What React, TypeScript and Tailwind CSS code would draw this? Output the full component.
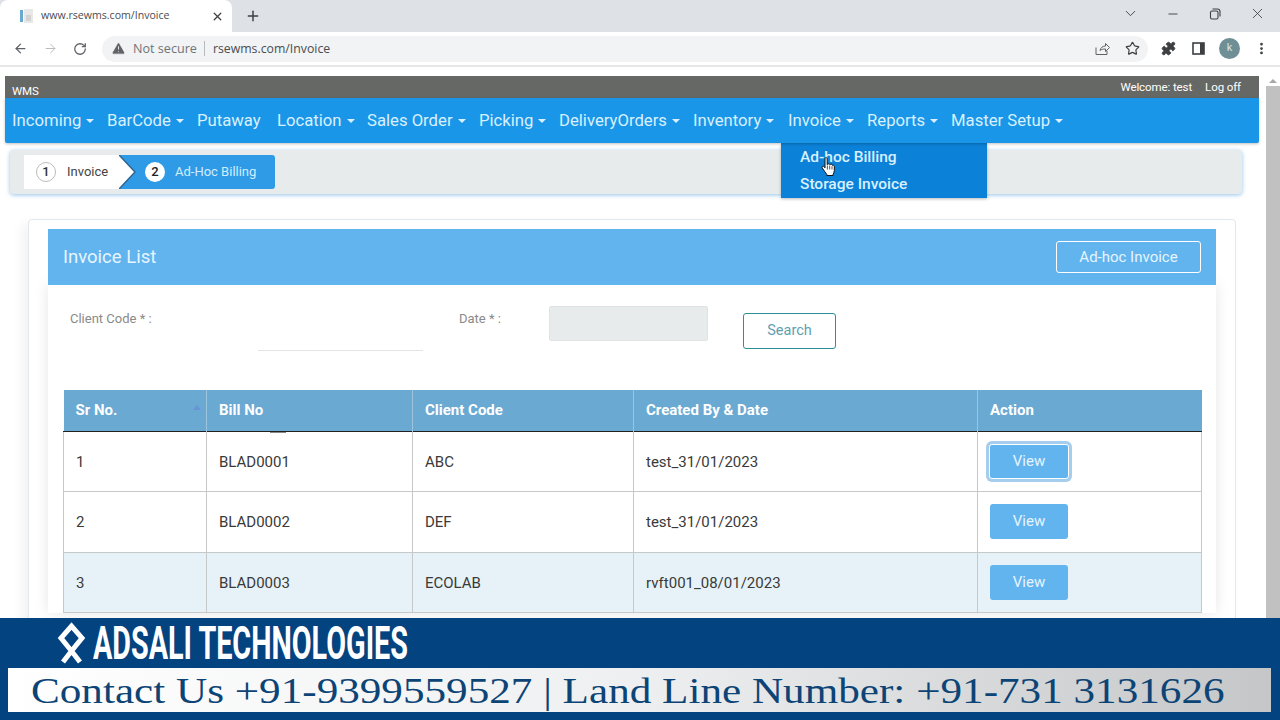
import React from "react";
import { ArrowLeft, ArrowRight, RotateCw, X, Plus, ChevronDown, Minus, Star, EllipsisVertical, Puzzle, TriangleAlert } from "lucide-react";

const navItems: [string, boolean, string][] = [
  ["Incoming", true, "w-[95px]"],
  ["BarCode", true, "w-[90px]"],
  ["Putaway", false, "w-[80px]"],
  ["Location", true, "w-[90px]"],
  ["Sales Order", true, "w-[112px]"],
  ["Picking", true, "w-[80px]"],
  ["DeliveryOrders", true, "w-[134px]"],
  ["Inventory", true, "w-[95px]"],
  ["Invoice", true, "w-[79px]"],
  ["Reports", true, "w-[84px]"],
  ["Master Setup", true, "w-[130px]"],
];

const rows = [
  ["1", "BLAD0001", "ABC", "test_31/01/2023", "h-[60px]"],
  ["2", "BLAD0002", "DEF", "test_31/01/2023", "h-[61px]"],
  ["3", "BLAD0003", "ECOLAB", "rvft001_08/01/2023", "h-[60px]"],
];

function Caret() {
  return <span className="ml-[5px] inline-block h-0 w-0 border-x-[4px] border-t-[4px] border-x-transparent border-t-[#d8f0ff] align-middle" />;
}

function HandCursor() {
  return (
    <svg width="16" height="20" viewBox="0 0 15 20" className="absolute left-[820px] top-[157px]">
      <path d="M4.5 1.6c0-1.3 2.2-1.3 2.2 0v6l.4-.1c.3-1 2-1 2.2 0l.3.3c.4-.9 2-.8 2.1.2l.2.4c.5-.6 1.8-.3 1.9.7v4.5c0 1.6-.7 2.7-1.2 3.7v1.2H6.3v-1.2c-1-1.2-2.6-3.4-4.5-6.3-.9-1.3.9-2.4 1.9-1.2l.8 1z" fill="#fff" stroke="#111" strokeWidth="1" strokeLinejoin="round" />
      <path d="M6.9 8.5v4M9.2 8.5v4M11.5 9.2v3.3" stroke="#111" strokeWidth=".7" />
    </svg>
  );
}

export default function App() {
  return (
    <div className="relative flex h-[720px] w-[1280px] flex-col overflow-hidden bg-white font-['Roboto',sans-serif]">
      {/* tab strip */}
      <div className="flex h-[32px] shrink-0 items-center bg-[#dee1e6] pr-[14px]">
        <div className="flex h-[32px] w-[232px] items-center rounded-t-[8px] bg-white pl-[19px] pr-[8px] font-['Open_Sans',sans-serif]">
          <svg width="16" height="16" viewBox="0 0 16 16" className="shrink-0">
            <rect x="1" y="2" width="3" height="12" fill="#6aa9cf" />
            <rect x="5" y="1" width="9" height="14" fill="#e8e8e8" />
            <path d="M7 8h5M7 10h5M7 12h5" stroke="#bdbdbd" strokeWidth="1" />
          </svg>
          <span className="ml-[6px] flex-1 text-[10.6px] text-[#4a4d51]">www.rsewms.com/Invoice</span>
          <X size={13} strokeWidth={2.4} className="text-[#3c4043]" />
        </div>
        <Plus size={16} strokeWidth={2.2} className="ml-[13px] text-[#3c4043]" />
        <div className="flex-1" />
        <ChevronDown size={17} strokeWidth={1.3} className="mb-[5px] text-[#3c4043]" />
        <Minus size={14} strokeWidth={1.6} className="mb-[5px] ml-[27px] text-[#3c4043]" />
        <svg width="12" height="12" viewBox="0 0 12 12" className="mb-[5px] ml-[29px]" fill="none" stroke="#3c4043" strokeWidth="1.1">
          <rect x="1.5" y="3" width="7.5" height="8" rx="1.5" />
          <path d="M3.5 1h5a2.500 2.500 0 0 1 2.500 2.500v5" />
        </svg>
        <X size={17} strokeWidth={1.2} className="mb-[5px] ml-[28px] text-[#3c4043]" />
      </div>
      {/* toolbar */}
      <div className="flex h-[33px] shrink-0 items-center bg-white pl-[13px]">
        <ArrowLeft size={15} strokeWidth={2} className="shrink-0 text-[#5f6368]" />
        <ArrowRight size={15} strokeWidth={1.5} className="ml-[15px] shrink-0 text-[#b5b8bc]" />
        <RotateCw size={14} strokeWidth={2.2} className="ml-[15px] shrink-0 text-[#5f6368]" />
        <div className="ml-[15px] flex h-[26px] w-[1046px] shrink-0 items-center rounded-full bg-[#f1f3f4] pl-[9px] pr-[8px] font-['Open_Sans',sans-serif]">
          <TriangleAlert size={15} fill="#5f6368" stroke="#f1f3f4" strokeWidth={1.4} className="shrink-0" />
          <span className="ml-[7px] mt-[1px] text-[12.6px] text-[#707478]">Not secure</span>
          <span className="ml-[7px] mr-[8px] h-[15px] w-px bg-[#b8bbbe]" />
          <span className="mt-[1px] text-[12.3px] text-[#4a4d51]">rsewms.com/Invoice</span>
          <div className="flex-1" />
          <svg width="15" height="15" viewBox="0 0 15 15" fill="none" stroke="#5f6368" strokeWidth="1" className="shrink-0">
            <path d="M1 6.500v7h11v-3.500M5 9.500c.5-3 3-4.500 5.500-4.500V2.500l4 4-4 4V8c-2.500 0-4 .3-5.500 1.500z" />
          </svg>
          <Star size={15} strokeWidth={1.9} className="ml-[15px] shrink-0 text-[#3c4043]" />
        </div>
        <Puzzle size={15} fill="#3c4043" strokeWidth={1.5} className="ml-[13px] shrink-0 text-[#3c4043]" />
        <svg width="13" height="13" viewBox="0 0 13 13" className="ml-[16px] shrink-0">
          <rect x="1" y="1" width="11" height="11" fill="none" stroke="#3c4043" strokeWidth="1.600" />
          <rect x="8" y="1" width="4" height="11" fill="#3c4043" />
        </svg>
        <div className="ml-[14px] flex h-[21px] w-[21px] shrink-0 items-center justify-center rounded-full bg-[#6f8f96] text-[11px] text-[#d7e3e6]">k</div>
        <EllipsisVertical size={15} strokeWidth={2.4} className="ml-[14px] shrink-0 text-[#3c4043]" />
      </div>
      {/* separator */}
      <div className="h-[2px] shrink-0 bg-[#e6e7e8]" />

      {/* page */}
      <div className="flex min-h-0 flex-1 overflow-hidden pt-[9px]">
        <div className="min-w-0 flex-1 pl-[5px]">
          <div className="flex h-[22px] items-center justify-between bg-[#666866] pl-[7px] pr-[18px] text-white">
            <span className="mt-[9px] text-[11.5px] tracking-[-0.1px]">WMS</span>
            <div className="mt-[1px] flex gap-[13px] text-[11.5px] tracking-[-0.1px]">
              <span>Welcome: test</span>
              <span>Log off</span>
            </div>
          </div>
          <div className="relative z-10 flex h-[45px] items-center rounded-b-[2px] bg-[#1a96e8] pl-[7px] text-[16.7px] text-[#d8f0ff] shadow-[0_1px_3px_rgba(0,0,0,0.25)]">
            {navItems.map(([label, caret, w]) => (
              <div key={label} className={`flex h-full items-center ${w}`}>
                <span>{label}</span>
                {caret && <Caret />}
              </div>
            ))}
          </div>
          {/* breadcrumb */}
          <div className="ml-[5px] mr-[17px] mt-[7px] flex h-[44px] items-center rounded-[4px] bg-[#e7ebec] pl-[14px] shadow-[0_1px_4px_rgba(100,170,230,0.7)]">
            <div className="flex h-[34px] w-[95px] items-center bg-white pl-[12px] text-[13px] text-[#444]">
              <span className="flex h-[20px] w-[20px] items-center justify-center rounded-full border border-[#bbb] font-medium text-[#333]">1</span>
              <span className="ml-[11px]">Invoice</span>
            </div>
            <svg width="17" height="34" viewBox="0 0 17 34" className="shrink-0">
              <rect width="17" height="34" fill="#2f9be6" />
              <path d="M0 0L16 17L0 34Z" fill="#fff" />
              <path d="M0 0L16 17L0 34" fill="none" stroke="#33658f" strokeWidth="1.500" />
            </svg>
            <div className="flex h-[34px] w-[139px] items-center rounded-r-[3px] bg-[#2f9be6] pl-[9px] text-[13px] text-[#d2edff]">
              <span className="flex h-[20px] w-[20px] items-center justify-center rounded-full bg-white font-medium text-[#222]">2</span>
              <span className="ml-[10px]">Ad-Hoc Billing</span>
            </div>
          </div>
          {/* card */}
          <div className="ml-[23px] mr-[23px] mt-[25px] rounded-[4px] border border-[#e2e9ec] bg-white px-[19px] pb-[20px] pt-[9px] shadow-[-6px_4px_12px_rgba(0,0,0,0.05)]">
            <div className="relative z-[1] flex h-[56px] items-center justify-between bg-[#62b4ee] pl-[15px] pr-[15px]">
              <span className="mt-[2px] text-[18.5px] text-[#e6f5ff]">Invoice List</span>
              <button className="h-[32px] w-[145px] rounded-[3px] border border-white text-[15px] text-[#e6f5ff]">Ad-hoc Invoice</button>
            </div>
            <div className="bg-white px-[15px] shadow-[0_0_14px_rgba(0,0,0,0.1)]">
              <div className="flex h-[105px] items-start text-[13px] text-[#8a8a8a]">
                <span className="ml-[7px] mt-[24px] w-[188px]">Client Code * :</span>
                <div className="mt-[65px] w-[165px] border-b border-[#e4e4e4]" />
                <span className="ml-[36px] mt-[24px] w-[90px]">Date * :</span>
                <div className="mt-[21px] h-[35px] w-[159px] rounded-[2px] border border-[#dfe3e5] bg-[#e7ebec]" />
                <button className="ml-[35px] mt-[28px] h-[36px] w-[93px] rounded-[3px] border border-[#2c8f99] text-[14.5px] text-[#5f9fb0]">Search</button>
              </div>
              <table className="w-[1139px] table-fixed border-collapse text-[15px] text-[#3a3a3a]">
                <thead>
                  <tr className="h-[41px] border-b border-[#222] bg-[#69a9d2] text-left font-bold text-white">
                    <th className="relative w-[143px] border-r border-[#9cc4de] pl-[12px]">Sr No.
                      <span className="absolute right-[5px] top-[15px] h-0 w-0 border-x-[4px] border-b-[5px] border-x-transparent border-b-[#6a93d8]" />
                    </th>
                    <th className="relative w-[206px] border-r border-[#9cc4de] pl-[12px]">Bill No
                      <span className="absolute bottom-[-2px] left-[63px] h-px w-[16px] bg-[#888]" />
                    </th>
                    <th className="w-[221px] border-r border-[#9cc4de] pl-[12px]">Client Code</th>
                    <th className="w-[344px] border-r border-[#9cc4de] pl-[12px]">Created By &amp; Date</th>
                    <th className="pl-[12px]">Action</th>
                  </tr>
                </thead>
                <tbody>
                  {rows.map((r, i) => (
                    <tr key={r[0]} className={`${r[4]} border border-[#c6c8ca] ${i === 2 ? "bg-[#e6f2f7]" : "bg-white"}`}>
                      <td className="border-r border-[#c6c8ca] pl-[12px] pt-[2px]">{r[0]}</td>
                      <td className="border-r border-[#c6c8ca] pl-[12px] pt-[2px]">{r[1]}</td>
                      <td className="border-r border-[#c6c8ca] pl-[12px] pt-[2px]">{r[2]}</td>
                      <td className="border-r border-[#c6c8ca] pl-[12px] pt-[2px]">{r[3]}</td>
                      <td className="pl-[12px]">
                        <button className={`h-[35px] rounded-[3px] bg-[#62b4ee] text-[15px] text-[#e6f5ff] ${i === 0 ? "-ml-px w-[80px] border border-white shadow-[0_0_0_3px_#a4cdee]" : "w-[78px]"}`}>View</button>
                      </td>
                    </tr>
                  ))}
                </tbody>
              </table>
            </div>
          </div>
        </div>
        {/* scrollbar */}
        <div className="ml-[7px] flex w-[14px] shrink-0 flex-col items-center">
          <span className="mb-[3px] mt-[3px] h-0 w-0 border-x-[4px] border-b-[4px] border-x-transparent border-b-[#a8a8a8]" />
          <div className="w-full flex-1 bg-[#c1c1c1]" />
        </div>
      </div>

      {/* footer */}
      <div className="flex h-[102px] shrink-0 flex-col bg-[#03437f]">
        <div className="flex h-[50px] items-center pl-[57px]">
          <svg width="30" height="44" viewBox="0 0 30 44" className="shrink-0">
            <path d="M6 41L14.500 30L25 17L14.500 5L4 17L14.500 30L23 41" fill="none" stroke="#fff" strokeWidth="5" />
          </svg>
          <span className="ml-[6px] origin-left scale-x-[0.625] whitespace-nowrap font-['Roboto',sans-serif] text-[46px] font-bold leading-none text-white">ADSALI TECHNOLOGIES</span>
        </div>
        <div className="mx-[8px] flex h-[44px] w-[1263px] items-center bg-gradient-to-r from-white via-[#eeeff0] to-[#c4c6c8] pl-[23px] font-['Liberation_Serif',serif] text-[#0d4476]">
          <span className="mt-[5px] origin-left scale-x-[1.233] whitespace-nowrap text-[35px]">Contact Us +91-9399559527 | Land Line Number: +91-731 3131626</span>
        </div>
      </div>

      {/* open dropdown */}
      <div className="absolute left-[781px] top-[98px] h-[45px] w-[76px] bg-[#0f86da] pl-[7px] text-[16.7px] leading-[45px] text-[#d8f0ff]">
        Invoice<Caret />
      </div>
      <div className="absolute left-[781px] top-[143px] flex h-[55px] w-[206px] flex-col bg-[#0b82d8] pl-[19px] pt-[1px] text-[15.5px] font-medium leading-[27px] text-[#d8f0ff] shadow-[0_1px_3px_rgba(0,0,0,0.25)]">
        <span>Ad-hoc Billing</span>
        <span>Storage Invoice</span>
      </div>
      <HandCursor />
    </div>
  );
}
